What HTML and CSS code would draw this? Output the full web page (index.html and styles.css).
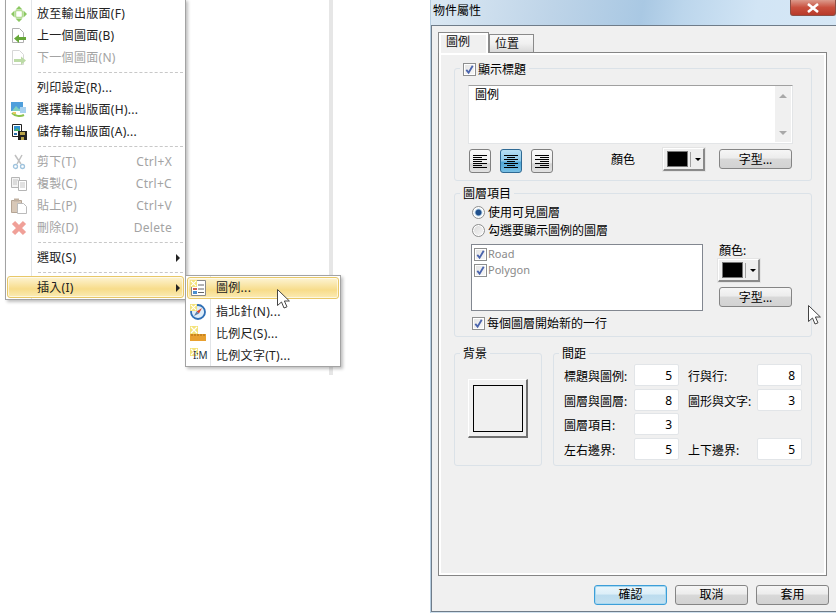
FILE: index.html
```html
<!DOCTYPE html>
<html lang="zh-Hant">
<head>
    <meta charset="UTF-8">
    <title>物件屬性</title>
    <link rel="stylesheet" href="styles.css">
</head>
<body>
    <svg class="defs" width="0" height="0">
        <symbol id="tick" viewBox="0 0 12 12">
            <path d="M2.5 6.5l2.5 3 4.500-7.500" fill="none" stroke="#4a64ad" stroke-width="2"/>
        </symbol>
        <symbol id="arrow" viewBox="0 0 13 21">
            <path d="M.5.5v16l4-3.500 2.500 6 3-1.200-2.600-5.800h5z" fill="#fff" stroke="#444"/>
        </symbol>
        <symbol id="star" viewBox="0 0 8 8">
            <path d="M0 0h8v8H0z" fill="#f3e27a"/>
            <path d="M1 1l6 6M7 1L1 7" stroke="#fff" stroke-width="1.200"/>
        </symbol>
    </svg>

    <div class="rule"></div>

    <!-- context menu -->
    <div class="menu main-menu">
        <div class="item">
            <svg class="icon" viewBox="0 0 16 16"><path fill="#8cc862" d="M8 0l3.500 3.500h-7zM8 16l-3.500-3.500h7zM0 8l3.500-3.500v7zM16 8l-3.500 3.500v-7z"/><path fill="none" stroke="#b4dc94" stroke-width="1.500" d="M5.500 4.500h5l1 1v5l-1 1h-5l-1-1v-5z"/></svg>
            <span>放至輸出版面(F)</span>
        </div>
        <div class="item">
            <svg class="icon" viewBox="0 0 16 16"><path fill="#fff" stroke="#b0b0b0" d="M1.500.5h7l4 4v10h-11z"/><path fill="#66a838" d="M3 10.500l5-4v2.500h7v3H8V15z"/></svg>
            <span>上一個圖面(B)</span>
        </div>
        <div class="item off">
            <svg class="icon faded" viewBox="0 0 16 16"><path fill="#fff" stroke="#b0b0b0" d="M1.500.5h7l4 4v10h-11z"/><path fill="#7cb850" d="M15 10.500l-5-4v2.500H3v3h7V15z"/></svg>
            <span>下一個圖面(N)</span>
        </div>
        <div class="sep"></div>
        <div class="item"><span class="no-icon">列印設定(R)...</span></div>
        <div class="item">
            <svg class="icon" viewBox="0 0 16 16"><path fill="#4f9fdc" d="M0 0h12v9H0z"/><path fill="#7fd0c0" d="M1 9l4-5 3 3 2-1 2 3z"/><path fill="#a9d2f0" d="M9 5h6v6H9z"/><path fill="none" stroke="#8cc24e" stroke-width="2" d="M1 11c3 3 8 4 12 2"/><path fill="#e6c860" d="M2 10h3v2H2z"/></svg>
            <span>選擇輸出版面(H)...</span>
        </div>
        <div class="item">
            <svg class="icon" viewBox="0 0 16 16"><path fill="#fff" stroke="#222" d="M1.500.5h9v12h-9z"/><path fill="#2f8fd0" d="M3 2h6v5H3z"/><path fill="#4dbb6a" d="M3 7l3-3 3 3z"/><path fill="#222" d="M7 7h9v9H7z"/><path fill="#b8a34a" d="M9 8h5v3H9zM10 13h3v3h-3z"/><path fill="#2a6fb0" d="M3 9h3v2H3z"/></svg>
            <span>儲存輸出版面(A)...</span>
        </div>
        <div class="sep"></div>
        <div class="item off">
            <svg class="icon" viewBox="0 0 16 16"><path fill="none" stroke="#c0c0c0" stroke-width="1.500" d="M4 1l6 9M11 1L6 10"/><circle cx="4.500" cy="12.500" r="2" fill="none" stroke="#a0c4de" stroke-width="1.300"/><circle cx="11.500" cy="12.500" r="2" fill="none" stroke="#a0c4de" stroke-width="1.300"/></svg>
            <span>剪下(T)</span><span class="keys">Ctrl+X</span>
        </div>
        <div class="item off">
            <svg class="icon" viewBox="0 0 16 16"><path fill="#f4f4f4" stroke="#b5b5b5" d="M.5 1.500h8v10h-8z"/><path fill="#fff" stroke="#b5b5b5" d="M7.500 4.500h8v10h-8z"/><path stroke="#c4c4c4" d="M2 4h5M2 6h4M2 8h4M9 7h5M9 9h5M9 11h5"/></svg>
            <span>複製(C)</span><span class="keys">Ctrl+C</span>
        </div>
        <div class="item off">
            <svg class="icon" viewBox="0 0 16 16"><path fill="#d8c8b8" stroke="#b5a595" d="M.5 2.500h10v12H.5z"/><path fill="#c0b0a0" d="M3 .5h5v3H3z"/><path fill="#fff" stroke="#bbb" d="M6.500 5.500h6l3 3v7h-9z"/></svg>
            <span>貼上(P)</span><span class="keys">Ctrl+V</span>
        </div>
        <div class="item off">
            <svg class="icon" viewBox="0 0 16 16"><path fill="none" stroke="#f0a098" stroke-width="4.500" d="M2.500 2.500l11 11M13.500 2.500l-11 11"/></svg>
            <span>刪除(D)</span><span class="keys">Delete</span>
        </div>
        <div class="sep"></div>
        <div class="item"><span class="no-icon">選取(S)</span><i class="more"></i></div>
        <div class="sep"></div>
        <div class="item lit"><span class="no-icon">插入(I)</span><i class="more"></i></div>
    </div>

    <div class="menu sub-menu">
        <div class="item lit">
            <svg class="icon" viewBox="0 0 16 16"><path fill="#fff" stroke="#8a8a8a" d="M1.500 .5h14v15h-14z"/><path fill="#e8a040" d="M3 4h4v3H3z"/><path fill="#d05a50" d="M3 8h4v2H3z"/><path fill="#4a90d0" d="M3 11h4v3H3z"/><path stroke="#666" d="M8 5h6M8 9h6M8 12.500h6"/><use href="#star" width="7" height="7"/></svg>
            <span>圖例...</span>
        </div>
        <div class="item">
            <svg class="icon" viewBox="0 0 16 16"><circle cx="8" cy="8" r="7" fill="#dfeefa" stroke="#2f6fb5" stroke-width="1.800"/><path fill="#d8472f" d="M12 4L9 9.500 6.500 7.500z"/><path fill="#5a7fa8" d="M4 12l2.500-4.500L9 9.500z"/><use href="#star" width="7" height="7"/></svg>
            <span>指北針(N)...</span>
        </div>
        <div class="item">
            <svg class="icon" viewBox="0 0 16 16"><path fill="#e8a030" d="M0 8h16v7H0z"/><path stroke="#a86a10" d="M2 8v2M5 8v2M8 8v2M11 8v2M14 8v2"/><use href="#star" width="8" height="8"/></svg>
            <span>比例尺(S)...</span>
        </div>
        <div class="item">
            <svg class="icon" viewBox="0 0 16 16"><use href="#star" width="8" height="8"/></svg>
            <b class="ratio">I:M</b>
            <span>比例文字(T)...</span>
        </div>
    </div>

    <svg class="cursor menu-cursor"><use href="#arrow"/></svg>

    <!-- properties dialog -->
    <div class="dialog">
        <div class="titlebar">
            <span>物件屬性</span>
            <div class="close"><svg viewBox="0 0 14 10" width="14" height="10"><path d="M2 1l10 8M12 1L2 9" stroke="#fff" stroke-width="2.600"/></svg></div>
        </div>
        <div class="client">
            <div class="tabs">
                <div class="tab active">圖例</div>
                <div class="tab">位置</div>
            </div>
            <div class="page">
                <div class="group title-group">
                    <div class="group-title">
                        <label class="check"><svg><use href="#tick"/></svg></label>顯示標題
                    </div>
                    <div class="title-box">
                        <span>圖例</span>
                        <div class="scroll"><i class="up"></i><i class="down"></i></div>
                    </div>
                    <div class="tool-row">
                        <div class="align-btn">
                            <svg viewBox="0 0 14 13" width="14" height="13"><path stroke="#000" d="M0 .5h14M0 2.500h9M0 4.500h14M0 6.500h9M0 8.500h14M0 10.500h9M0 12.500h14"/></svg>
                        </div>
                        <div class="align-btn on">
                            <svg viewBox="0 0 14 13" width="14" height="13"><path stroke="#000" d="M0 .5h14M3 2.500h8M0 4.500h14M3 6.500h8M0 8.500h14M3 10.500h8M0 12.500h14"/></svg>
                        </div>
                        <div class="align-btn">
                            <svg viewBox="0 0 14 13" width="14" height="13"><path stroke="#000" d="M0 .5h14M5 2.500h9M0 4.500h14M5 6.500h9M0 8.500h14M5 10.500h9M0 12.500h14"/></svg>
                        </div>
                        <span class="color-label">顏色</span>
                        <div class="color-btn"><i class="swatch"></i><i class="caret"></i></div>
                        <div class="btn font-btn">字型...</div>
                    </div>
                </div>

                <div class="group layer-group">
                    <div class="group-title">圖層項目</div>
                    <div class="option"><i class="radio on"></i>使用可見圖層</div>
                    <div class="option"><i class="radio"></i>勾選要顯示圖例的圖層</div>
                    <div class="layer-row">
                        <div class="layer-list">
                            <div class="layer"><label class="check"><svg><use href="#tick"/></svg></label>Road</div>
                            <div class="layer"><label class="check"><svg><use href="#tick"/></svg></label>Polygon</div>
                        </div>
                        <div class="layer-side">
                            <div>顏色:</div>
                            <div class="color-btn"><i class="swatch"></i><i class="caret"></i></div>
                            <div class="btn font-btn">字型...</div>
                        </div>
                    </div>
                    <div class="option newline"><label class="check"><svg><use href="#tick"/></svg></label>每個圖層開始新的一行</div>
                </div>

                <div class="bottom-row">
                    <div class="group bg-group">
                        <div class="group-title">背景</div>
                        <div class="bg-btn"><i></i></div>
                    </div>
                    <div class="group gap-group">
                        <div class="group-title">間距</div>
                        <div class="gap-grid">
                            <span>標題與圖例:</span><div class="num">5</div>
                            <span>行與行:</span><div class="num">8</div>
                            <span>圖層與圖層:</span><div class="num">8</div>
                            <span>圖形與文字:</span><div class="num">3</div>
                            <span>圖層項目:</span><div class="num">3</div>
                            <span></span><span></span>
                            <span>左右邊界:</span><div class="num">5</div>
                            <span>上下邊界:</span><div class="num">5</div>
                        </div>
                    </div>
                </div>
            </div>
            <div class="actions">
                <div class="btn default">確認</div>
                <div class="btn">取消</div>
                <div class="btn">套用</div>
            </div>
        </div>
    </div>

    <svg class="cursor dialog-cursor"><use href="#arrow"/></svg>
</body>
</html>
```

FILE: styles.css
```css
html, body {
    margin: 0;
    padding: 0;
    height: 613px;
    overflow: hidden;
    background-color: white;
}

body {
    font-family: "Noto Sans", "Noto Sans CJK TC", sans-serif;
    font-size: 12px;
    line-height: 16px;
    color: #111;
}

.defs {
    position: absolute;
}

.rule {
    position: absolute;
    left: 329px;
    top: 0;
    width: 4px;
    height: 375px;
    background-color: #e6e6e6;
}

/* menus */
.menu {
    position: absolute;
    box-sizing: border-box;
    background: linear-gradient(to right, #fff 25px, #e2e5e8 25px, #e2e5e8 26px, #fff 26px);
    border: 1px solid #a3a3a3;
    box-shadow: 2px 2px 3px rgba(0, 0, 0, 0.25);
}

.main-menu {
    left: 5px;
    top: -1px;
    width: 181px;
    height: 301px;
    padding: 3px 1px 1px 0;
}

.sub-menu {
    left: 185px;
    top: 275px;
    width: 156px;
    height: 92px;
    padding: 1px 1px 0 0;
    background: linear-gradient(to right, #fff 24px, #e2e5e8 24px, #e2e5e8 25px, #fff 25px);
}

.item {
    display: flex;
    align-items: center;
    height: 22px;
    color: #222;
    letter-spacing: 0.3px;
}

.item.off {
    color: #a3a3a3;
}

.item .icon {
    flex: none;
    width: 16px;
    height: 16px;
    margin: 0 10px 0 5px;
}

.item .faded {
    opacity: 0.5;
}

.no-icon {
    margin-left: 31px;
}

.keys {
    margin-left: auto;
    margin-right: 12px;
}

.more {
    margin-left: auto;
    margin-right: 4px;
    border-left: 4px solid #222;
    border-top: 4px solid transparent;
    border-bottom: 4px solid transparent;
}

.sep {
    height: 0;
    margin: 3px 1px 4px 32px;
    border-top: 1px dashed #c8c8c8;
}

.item.lit {
    box-sizing: border-box;
    margin-left: 1px;
    border: 1px solid #e8c868;
    border-radius: 3px;
    box-shadow: inset 0 0 0 1px rgba(255, 255, 255, 0.6);
    background: linear-gradient(to bottom, #fdf4d4, #f7dc8a 60%, #fbebb4);
}

.main-menu .lit {
    margin-top: -1px;
    padding-top: 2px;
}

.main-menu .lit .no-icon {
    margin-left: 29px;
}

.main-menu .lit .more {
    margin-right: 3px;
}

.sub-menu .item .icon {
    margin-left: 4px;
    margin-right: 10px;
}

.sub-menu .lit {
    margin-bottom: 2px;
}

.sub-menu .item.lit .icon {
    margin-left: 2px;
}

.ratio {
    position: absolute;
    left: 7px;
    bottom: 3px;
    font-size: 10px;
    font-weight: normal;
    color: #234;
    letter-spacing: -0.3px;
}

.cursor {
    position: absolute;
    width: 13px;
    height: 21px;
}

.menu-cursor {
    left: 277px;
    top: 289px;
}

.dialog-cursor {
    left: 808px;
    top: 305px;
}

/* dialog */
.dialog {
    position: absolute;
    left: 430px;
    top: 0;
    box-sizing: border-box;
    width: 406px;
    height: 613px;
    border-left: 1px solid #b6cde0;
    background-color: #cfe0ee;
}

.titlebar {
    position: relative;
    box-sizing: border-box;
    height: 25px;
    padding: 3px 0 0 2px;
    color: #000;
    background: linear-gradient(100deg, #dbe8f3 0%, #bed4e8 30%, #a9c8e3 52%, #bcd6ec 62%, #d2e5f5 80%, #d6e7f5 100%);
}

.close {
    position: absolute;
    right: 0;
    top: 0;
    display: flex;
    justify-content: center;
    align-items: center;
    box-sizing: border-box;
    width: 46px;
    height: 16px;
    border: 1px solid #8c4f45;
    border-top: none;
    border-radius: 0 0 3px 3px;
    background: linear-gradient(to bottom, #dc9a8c, #c9503e 50%, #b83a2a);
}

.client {
    box-sizing: border-box;
    height: 587px;
    padding: 6px 8px 0 6px;
    border: 1px solid #6f7c89;
    border-right: none;
    background-color: #f0f0f0;
}

.tabs {
    display: flex;
    align-items: flex-end;
    height: 20px;
}

.tab {
    position: relative;
    box-sizing: border-box;
    height: 18px;
    padding: 1px 14px 0 5px;
    border: 1px solid #8a8a8a;
    border-bottom: none;
    background: linear-gradient(to bottom, #f8f8f8, #f0f0f0 50%, #d9d9d9);
}

.tab.active {
    z-index: 1;
    width: 51px;
    height: 21px;
    margin-bottom: -1px;
    padding: 1px 0 0 7px;
    border-right: 1px solid #8a8a8a;
    background: #f0f0f0;
    box-shadow: inset 2px 2px 0 #fff, inset -2px 0 0 #fff;
}

.page {
    box-sizing: border-box;
    width: 389px;
    height: 524px;
    padding: 15px 0 0 15px;
    border: 1px solid #858585;
    box-shadow: inset 0 0 0 2px #fff;
}

.group {
    box-sizing: border-box;
    width: 358px;
    border: 1px solid #dbe2e8;
    border-radius: 3px;
}

.group-title {
    display: flex;
    align-items: center;
    width: fit-content;
    height: 16px;
    margin-top: -8px;
    padding: 0 3px;
    background-color: #f0f0f0;
    color: #000;
}

.check {
    display: block;
    flex: none;
    box-sizing: border-box;
    width: 13px;
    height: 13px;
    margin-right: 2px;
    border: 1px solid #8e8f8f;
    background: linear-gradient(to bottom right, #e4e4e4, #f8f8f8);
    box-shadow: inset 0 0 0 1px #fff;
}

.check svg {
    display: block;
    width: 11px;
    height: 11px;
}

/* title group */
.title-group {
    height: 113px;
    padding-left: 13px;
}

.title-group .group-title {
    margin-left: -8px;
    padding-top: 2px;
    box-sizing: border-box;
}

.title-group .group-title .check {
    margin-top: -2px;
}

.title-box {
    display: flex;
    justify-content: space-between;
    box-sizing: border-box;
    width: 325px;
    height: 59px;
    margin-top: 8px;
    padding: 0 1px 1px 6px;
    border: 1px solid #e3e5e7;
    border-top-color: #a0a0a0;
    background-color: white;
    color: #000;
}

.title-box > span {
    padding-top: 1px;
}

.scroll {
    display: flex;
    flex-direction: column;
    justify-content: space-between;
    align-items: center;
    box-sizing: border-box;
    width: 16px;
    padding: 8px 0 7px;
    background-color: #f0f0f0;
}

.up {
    border: 4px solid transparent;
    border-top: none;
    border-bottom: 4px solid #a8a8a8;
}

.down {
    border: 4px solid transparent;
    border-bottom: none;
    border-top: 4px solid #a8a8a8;
}

.tool-row {
    display: flex;
    align-items: flex-start;
    margin-top: 4px;
    padding-left: 1px;
}

.align-btn {
    display: flex;
    justify-content: center;
    align-items: center;
    box-sizing: border-box;
    width: 22px;
    height: 24px;
    margin: 1px 9px 0 0;
    border: 1px solid #808080;
    border-radius: 3px;
    background: linear-gradient(to bottom, #fafafa, #ececec 60%, #d4d4d4 62%, #e2e2e2);
}

.align-btn.on {
    border-color: #2f6a94;
    background: linear-gradient(to bottom, #b8e0f4, #8cc8e8 50%, #4fa6d6 55%, #78bfe4);
}

.color-label {
    margin: 4px 28px 0 49px;
    color: #000;
}

.color-btn {
    display: flex;
    align-items: center;
    box-sizing: border-box;
    width: 42px;
    height: 23px;
    padding-left: 3px;
    border: solid;
    border-width: 1px 2px 2px 1px;
    border-color: #fff #8a8a8a #8a8a8a #fff;
    box-shadow: 0 0 0 1px #e4e4e4;
    background-color: #eee;
}

.swatch {
    box-sizing: border-box;
    width: 21px;
    height: 16px;
    margin-right: 2px;
    border: 1px solid #777;
    background-color: #000;
}

.caret {
    position: relative;
    width: 0;
    height: 15px;
    padding-left: 3px;
    border-left: 1px solid #a0a0a0;
}

.caret::after {
    content: "";
    position: absolute;
    left: 4px;
    top: 6px;
    border: 3px solid transparent;
    border-bottom: none;
    border-top: 3px solid #000;
}

.btn {
    box-sizing: border-box;
    width: 73px;
    height: 20px;
    border: 1px solid #858585;
    border-radius: 3px;
    text-align: center;
    line-height: 17px;
    color: #000;
    background: linear-gradient(to bottom, #f6f6f6, #ececec 45%, #d8d8d8 50%, #d2d2d2);
}

.font-btn {
    margin-top: 1px;
    margin-left: 14px;
    line-height: 19px;
}

/* layer group */
.layer-group {
    height: 144px;
    margin-top: 12px;
    padding-left: 16px;
}

.layer-group .group-title {
    margin-left: -11px;
}

.option {
    display: flex;
    align-items: center;
    box-sizing: border-box;
    height: 18px;
    margin-left: 1px;
    padding-top: 2px;
    color: #000;
}

.layer-group .group-title + .option {
    margin-top: 1px;
}

.option .radio,
.option .check {
    margin-top: -2px;
}

.radio {
    flex: none;
    box-sizing: border-box;
    width: 13px;
    height: 13px;
    margin-right: 3px;
    border: 1px solid #8e8f8f;
    border-radius: 50%;
    background: linear-gradient(to bottom right, #d8d8d8, #f8f8f8);
    box-shadow: inset 0 0 0 1px #fff;
}

.radio.on {
    background: radial-gradient(circle, #1f4f8c 0 2.5px, #bcd6ea 3.5px, #fff 4.5px);
}

.layer-row {
    display: flex;
    margin-top: 5px;
}

.layer-list {
    box-sizing: border-box;
    width: 232px;
    height: 67px;
    padding: 1px 2px;
    border: 1px solid #828790;
    background-color: white;
}

.layer {
    display: flex;
    align-items: center;
    height: 16px;
    color: #8a8a8a;
    font-size: 11px;
}

.layer .check {
    margin-right: 1px;
}

.layer-side {
    margin-left: 15px;
    color: #000;
}

.layer-side > div:first-child {
    height: 15px;
    margin-left: 1px;
    line-height: 13px;
}

.layer-side .font-btn {
    margin: 5px 0 0 1px;
}

.newline {
    height: 16px;
    margin-top: 4px;
}

/* bottom groups */
.bottom-row {
    display: flex;
    gap: 11px;
    margin-top: 16px;
}

.bottom-row .group {
    height: 113px;
}

.bg-group {
    width: 88px;
    padding-left: 13px;
}

.bg-group .group-title {
    margin-left: -8px;
}

.bg-btn {
    display: flex;
    justify-content: center;
    align-items: center;
    box-sizing: border-box;
    width: 60px;
    height: 59px;
    margin-top: 17px;
    border: solid;
    border-width: 1px 2px 2px 1px;
    border-color: #fff #707070 #707070 #fff;
    background-color: #f0f0f0;
}

.bg-btn i {
    box-sizing: border-box;
    width: 50px;
    height: 47px;
    border: 1px solid #000;
}

.gap-group {
    width: 259px;
    padding-left: 10px;
}

.gap-group .group-title {
    margin-left: -5px;
}

.gap-grid {
    display: grid;
    grid-template-columns: 70px 45px 78px 45px;
    grid-template-rows: 25px 24px 25px 22px;
    align-items: start;
    margin-top: 2px;
    color: #000;
}

.gap-grid span {
    height: 22px;
    line-height: 25px;
    white-space: nowrap;
}

.gap-grid span:nth-child(4n + 3) {
    margin-left: 9px;
}

.num {
    box-sizing: border-box;
    height: 22px;
    padding-right: 6px;
    border: 1px solid #e2e5e8;
    border-radius: 2px;
    background-color: white;
    text-align: right;
    line-height: 22px;
}

/* dialog buttons */
.actions {
    display: flex;
    justify-content: flex-end;
    gap: 8px;
    margin-top: 9px;
    margin-right: -1px;
}

.btn.default {
    border: 1px solid #3c9ed8;
    box-shadow: 0 0 0 1px #a8d8f0 inset;
    background: linear-gradient(to bottom, #eaf6fc, #dceef8 45%, #bcdcee 50%, #c4e0f0);
}
```
